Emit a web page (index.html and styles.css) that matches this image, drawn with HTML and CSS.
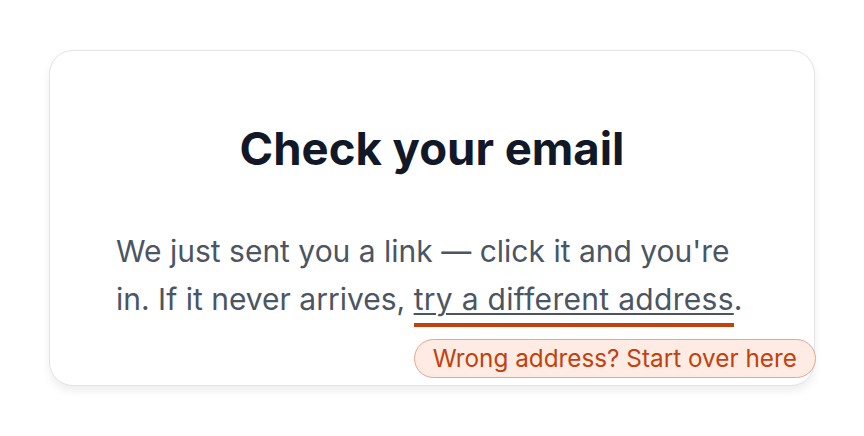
FILE: index.html
```html
<!DOCTYPE html>
<html lang="en">
<head>
    <meta charset="UTF-8">
    <meta name="viewport" content="width=device-width, initial-scale=1.0">
    <title>Check your email</title>
    <link rel="stylesheet" href="styles.css">
</head>
<body>
    <div class="card">
        <h1 class="title">Check your email</h1>
        <p class="message">
            We just sent you a link — click it and you're in. If it never arrives,
            <a href="#" class="retry">try a different address<span class="hint">Wrong address? Start over here</span></a>.
        </p>
    </div>
</body>
</html>
```

FILE: styles.css
```css
html, body {
    margin: 0;
    height: 100%;
}
body {
    display: flex;
    justify-content: center;
    align-items: center;
    background: #ffffff;
    font-family: Inter, "Noto Sans", sans-serif;
}
.card {
    box-sizing: border-box;
    width: 766px;
    padding: 70px 66px 62px;
    background: #ffffff;
    border: 1.5px solid #e4e4e7;
    border-radius: 24px;
    box-shadow: 0 5px 8px rgba(0, 0, 0, 0.07);
}
.title {
    margin: 0 0 50px;
    font-size: 45.5px;
    line-height: 56px;
    font-weight: 700;
    color: #111827;
    text-align: center;
}
.message {
    margin: 0;
    font-size: 30px;
    line-height: 48px;
    color: #4b5563;
}
.retry {
    position: relative;
    color: #4b5563;
    letter-spacing: 0.3px;
    text-decoration: underline;
    text-decoration-thickness: 1.5px;
    text-underline-offset: 3px;
    padding-bottom: 6px;
    border-bottom: 4px solid #c2410c;
}
.hint {
    position: absolute;
    left: 0;
    top: calc(100% + 16px);
    padding: 0 18px;
    height: 37px;
    line-height: 37px;
    font-size: 24.3px;
    letter-spacing: 0;
    color: #c2410c;
    background: #fdebe4;
    border: 1.5px solid #e6a68c;
    border-radius: 20px;
    white-space: nowrap;
}
```
